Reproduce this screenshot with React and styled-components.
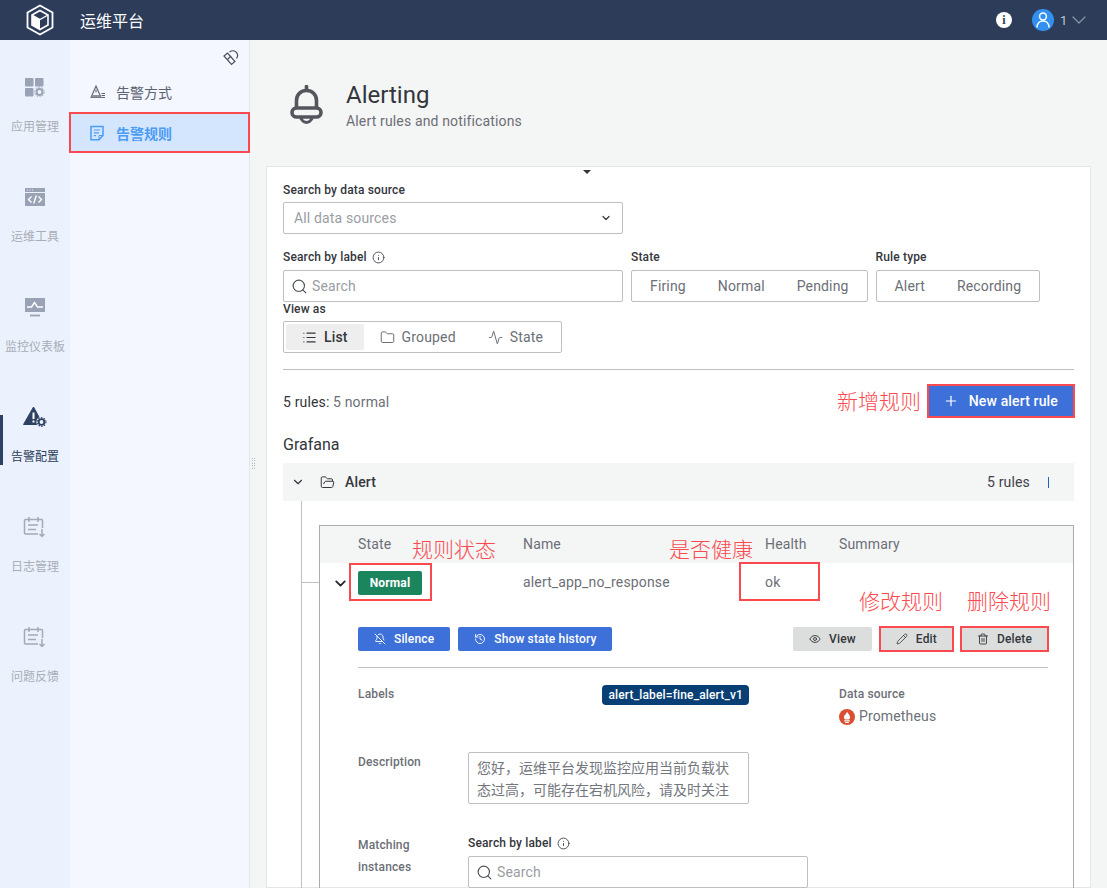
import React from 'react';
import styled, {createGlobalStyle} from 'styled-components';
import {
  Activity,
  BellOff,
  ChevronDown,
  Eye,
  Folder,
  FolderOpen,
  History,
  Info,
  List,
  Pencil,
  Plus,
  Search,
  Trash2,
} from 'lucide-react';

const FONT = `Roboto, "Noto Sans CJK SC", sans-serif`;
const RED = '#fa4a4f';

const LogoIcon = () => (
  <svg width="30" height="32" viewBox="0 0 30 32" fill="none" stroke="#fff">
    <path d="M15 1.5 27.5 8.5V23.5L15 30.5 2.5 23.5V8.5Z" strokeWidth="1.8" />
    <path d="M15 6.5 23 11V21L15 25.5 7 21V11Z" strokeWidth="1.6" />
    <path d="M15 15.5V25.5L7 21V11Z" fill="#fff" stroke="none" />
    <path d="M7 11 15 15.5 23 11" strokeWidth="1.4" />
  </svg>
);

const AppsIcon = () => (
  <svg width="22" height="20" viewBox="0 0 22 20" fill="#9aa3b5">
    <rect x="1" y="1" width="8.5" height="8.5" rx="1" />
    <rect x="11" y="1" width="8.5" height="8.5" rx="1" />
    <rect x="1" y="11" width="8.5" height="8.5" rx="1" />
    <circle cx="15.5" cy="15" r="3" fill="none" stroke="#9aa3b5" strokeWidth="2" />
    <circle cx="15.5" cy="15" r="4.8" fill="none" stroke="#9aa3b5" strokeWidth="1" strokeDasharray="1.5 1.5" />
  </svg>
);

const CodeIcon = () => (
  <svg width="22" height="20" viewBox="0 0 22 20">
    <rect x="1" y="1" width="20" height="18" fill="#9aa3b5" />
    <path d="M1 5.5H21" stroke="#ebf2fd" strokeWidth="1" />
    <path d="M3 3H4M5.5 3H6.5M8 3H9" stroke="#ebf2fd" strokeWidth="1" />
    <path
      d="M7.5 9.5 4.5 12.5 7.5 15.5M14.5 9.5 17.5 12.5 14.5 15.5M12.3 8.5 9.7 16.5"
      stroke="#fff"
      strokeWidth="1.4"
      fill="none"
    />
  </svg>
);

const MonitorIcon = () => (
  <svg width="22" height="20" viewBox="0 0 22 20">
    <rect x="1" y="1" width="20" height="14" fill="#9aa3b5" />
    <path d="M3 10H7.5L10.5 5.5 13.5 10H19" stroke="#fff" strokeWidth="1.5" fill="none" />
    <path d="M6 18.5H16" stroke="#9aa3b5" strokeWidth="1.8" />
  </svg>
);

const AlertGearIcon = () => (
  <svg width="24" height="22" viewBox="0 0 24 22">
    <path d="M10.5 1 20 18.5H.5Z" fill="#2f4163" stroke="#2f4163" strokeLinejoin="round" />
    <path d="M10.5 6.5V13M10.5 14.5V16.5" stroke="#fff" strokeWidth="2" />
    <circle cx="18.5" cy="16" r="5.2" fill="#ebf2fd" />
    <circle cx="18.5" cy="16" r="2.8" fill="none" stroke="#2f4163" strokeWidth="1.8" />
    <circle cx="18.5" cy="16" r="4.4" fill="none" stroke="#2f4163" strokeWidth="1.1" strokeDasharray="1.5 1.3" />
  </svg>
);

const CalendarIcon = () => (
  <svg width="24" height="22" viewBox="0 0 24 22" fill="none" stroke="#a3abbb" strokeWidth="1.5">
    <path d="M19.5 12V4.5Q19.5 3.5 18.5 3.5H2.5Q1.5 3.5 1.5 4.5V17Q1.5 18 2.5 18H15" />
    <path d="M6 1V6M15 1V6M5 9H15M5 13.5H13" />
    <path d="M19 13V20.5M16.5 18 19 20.5 21.5 18" />
  </svg>
);

const AlertMethodIcon = () => (
  <svg width="16" height="14" viewBox="0 0 16 14" fill="none" stroke="#5d6270" strokeWidth="1.1">
    <path d="M6 1 11 12.5H1Z" />
    <path d="M2.5 10H9.8L11 12.5H1Z" fill="#8b8f9a" stroke="none" />
    <path d="M6 4.5V7.5M11.5 8.5H15M11.5 10.5H15M11.5 12.5H15" />
  </svg>
);

const AlertRuleIcon = () => (
  <svg width="14" height="16" viewBox="0 0 14 16" fill="none" stroke="#4b9cf5" strokeWidth="1.5">
    <path d="M1 1.5H13V10.5L9 14.8H1Z" />
    <path d="M9 14.8V10.5H13" strokeWidth="1" />
    <path d="M3.8 5H10M3.8 7.8H9M3.8 10.6H6" strokeWidth="1.2" />
  </svg>
);

const PinIcon = () => (
  <svg width="16" height="16" viewBox="0 0 16 16" fill="none" stroke="#4c5058" strokeWidth="1.2">
    <path d="M1 6 4.5 3 12 11.5 8.5 14.5Z" />
    <path d="M6.5 2Q10 -.5 13 2T13.5 8.5" />
    <path d="M4.5 9.5 8 6" />
  </svg>
);

const BellIcon = () => (
  <svg width="33" height="40" viewBox="0 0 33 40" fill="none" stroke="#53565c" strokeWidth="3.6">
    <path d="M16.5 1.5V5" strokeLinecap="round" />
    <path d="M6.5 23V15.5C6.5 9.5 11 5.5 16.5 5.5S26.5 9.5 26.5 15.5V23" />
    <rect x="2" y="23" width="29" height="9" rx="4.5" />
    <path d="M10.5 33Q16.5 42 22.5 33" strokeWidth="3" />
  </svg>
);

const UserIcon = () => (
  <svg width="14" height="16" viewBox="0 0 14 16" fill="none" stroke="#fff" strokeWidth="1.5">
    <circle cx="7" cy="4.5" r="3.4" />
    <path d="M1 15.5C1 11.5 3.5 9 7 9S13 11.5 13 15.5" />
  </svg>
);

const PrometheusIcon = () => (
  <svg width="16" height="16" viewBox="0 0 16 16">
    <circle cx="8" cy="8" r="8" fill="#da4e31" />
    <path d="M8 2.5C9 5 11 5.5 11 8.5 11 9.5 10.5 10 10 10.5H6C5.5 10 5 9.5 5 8.5 5 5.5 7.5 5.5 8 2.5Z" fill="#fff" />
    <path d="M5.2 11.3H10.8V12.5H5.2ZM6.2 13H9.8V14H6.2Z" fill="#fff" />
  </svg>
);

const railItems = [
  {label: '应用管理', icon: <AppsIcon />},
  {label: '运维工具', icon: <CodeIcon />},
  {label: '监控仪表板', icon: <MonitorIcon />},
  {label: '告警配置', icon: <AlertGearIcon />, active: true},
  {label: '日志管理', icon: <CalendarIcon />},
  {label: '问题反馈', icon: <CalendarIcon />},
];

const notes = [
  {text: '新增规则', x: 837, y: 386},
  {text: '规则状态', x: 412, y: 534},
  {text: '是否健康', x: 669, y: 534},
  {text: '修改规则', x: 859, y: 586},
  {text: '删除规则', x: 967, y: 586},
];

const SearchBox = () => (
  <InputBox>
    <Search size={17} color="#4b4f56" strokeWidth={1.6} />
    <Placeholder>Search</Placeholder>
  </InputBox>
);

const App = () => (
  <Page>
    <GlobalStyle />
    <TopBar>
      <LogoSlot>
        <LogoIcon />
      </LogoSlot>
      <Brand>运维平台</Brand>
      <TopActions>
        <InfoDot>i</InfoDot>
        <Avatar>
          <UserIcon />
        </Avatar>
        <UserName>1</UserName>
        <ChevronDown size={24} color="#8693a8" strokeWidth={1.3} />
      </TopActions>
    </TopBar>

    <Body>
      <Rail>
        {railItems.map(item => (
          <RailItem key={item.label} $active={item.active}>
            <RailIcon>{item.icon}</RailIcon>
            <RailLabel $active={item.active}>{item.label}</RailLabel>
          </RailItem>
        ))}
      </Rail>

      <SubNav>
        <PinSlot>
          <PinIcon />
        </PinSlot>
        <SubItem>
          <AlertMethodIcon />
          告警方式
        </SubItem>
        <SubItem $active>
          <AlertRuleIcon />
          告警规则
        </SubItem>
        <Handle />
      </SubNav>

      <Main>
        <Header>
          <BellIcon />
          <div>
            <Title>Alerting</Title>
            <Subtitle>Alert rules and notifications</Subtitle>
          </div>
        </Header>

        <Card>
          <Caret />
          <FieldLabel $gap="5px">Search by data source</FieldLabel>
          <SelectBox>
            <SelectText>All data sources</SelectText>
            <ChevronDown size={12} color="#33363c" strokeWidth={2.4} />
          </SelectBox>

          <FilterRow>
            <Field $width="340px">
              <FieldLabel>
                Search by label
                <Info size={13} color="#4b4f56" strokeWidth={1.8} />
              </FieldLabel>
              <SearchBox />
            </Field>
            <Field>
              <FieldLabel>State</FieldLabel>
              <Segments>
                <Segment>Firing</Segment>
                <Segment>Normal</Segment>
                <Segment>Pending</Segment>
              </Segments>
            </Field>
            <Field>
              <FieldLabel>Rule type</FieldLabel>
              <Segments>
                <Segment>Alert</Segment>
                <Segment>Recording</Segment>
              </Segments>
            </Field>
          </FilterRow>

          <FieldLabel $gap="5px">View as</FieldLabel>
          <Segments>
            <Segment $active>
              <List size={15} strokeWidth={1.8} />
              List
            </Segment>
            <Segment>
              <Folder size={15} strokeWidth={1.6} />
              Grouped
            </Segment>
            <Segment>
              <Activity size={15} strokeWidth={1.6} />
              State
            </Segment>
          </Segments>

          <Divider />

          <StatsRow>
            <Stats>
              <strong>5 rules:</strong> 5 normal
            </Stats>
            <PrimaryButton $large $marked>
              <Plus size={16} strokeWidth={1.8} />
              New alert rule
            </PrimaryButton>
          </StatsRow>

          <Namespace>Grafana</Namespace>
          <GroupRow>
            <ChevronDown size={14} color="#33363c" />
            <FolderOpen size={15} color="#33363c" strokeWidth={1.6} />
            <GroupName>Alert</GroupName>
            <GroupCount>5 rules</GroupCount>
            <GroupTick />
          </GroupRow>

          <GroupBody>
            <RuleTable>
              <TableHead>
                <span>State</span>
                <span>Name</span>
                <span>Health</span>
                <span>Summary</span>
              </TableHead>

              <RuleRow>
                <RowChevron>
                  <ChevronDown size={17} color="#24262b" strokeWidth={2.6} />
                </RowChevron>
                <Badge>Normal</Badge>
                <RowText>alert_app_no_response</RowText>
                <RowText>ok</RowText>
              </RuleRow>

              <Details>
                <Actions>
                  <PrimaryButton>
                    <BellOff size={12} strokeWidth={1.8} />
                    Silence
                  </PrimaryButton>
                  <PrimaryButton>
                    <History size={12} strokeWidth={1.8} />
                    Show state history
                  </PrimaryButton>
                  <Spacer />
                  <GreyButton>
                    <Eye size={12} strokeWidth={1.8} />
                    View
                  </GreyButton>
                  <GreyButton $marked>
                    <Pencil size={12} strokeWidth={1.6} />
                    Edit
                  </GreyButton>
                  <GreyButton $marked>
                    <Trash2 size={12} strokeWidth={1.8} />
                    Delete
                  </GreyButton>
                </Actions>
                <ThinDivider />

                <InfoGrid>
                  <InfoLabel $offset="1px">Labels</InfoLabel>
                  <TagCell>
                    <Tag>alert_label=fine_alert_v1</Tag>
                  </TagCell>
                  <span />
                  <div>
                    <InfoLabel $offset="1px">Data source</InfoLabel>
                    <Source>
                      <PrometheusIcon />
                      Prometheus
                    </Source>
                  </div>
                </InfoGrid>

                <InfoGrid $top="26px">
                  <InfoLabel $offset="2px">Description</InfoLabel>
                  <Description>
                    您好，运维平台发现监控应用当前负载状态过高，可能存在宕机风险，请及时关注
                  </Description>
                </InfoGrid>

                <MatchGrid>
                  <MatchLabel>
                    Matching
                    <br />
                    instances
                  </MatchLabel>
                  <div>
                    <FieldLabel>
                      Search by label
                      <Info size={13} color="#4b4f56" strokeWidth={1.8} />
                    </FieldLabel>
                    <SearchBox />
                  </div>
                </MatchGrid>
              </Details>
            </RuleTable>
          </GroupBody>
        </Card>
      </Main>
    </Body>

    {notes.map(note => (
      <Note key={note.text} $x={note.x} $y={note.y}>
        {note.text}
      </Note>
    ))}
    <RedBox $x={349} $y={563} $w={83} $h={38} />
    <RedBox $x={739} $y={562} $w={81} $h={39} />
  </Page>
);

export default App;

const GlobalStyle = createGlobalStyle`
  html, body {
    margin: 0;
    padding: 0;
    height: 100%;
    overflow: hidden;
  }
  * {
    box-sizing: border-box;
  }
`;

const Page = styled.div`
  position: relative;
  width: 1107px;
  height: 888px;
  overflow: hidden;
  font-family: ${FONT};
  letter-spacing: 0.15px;
  color: #3f4249;
  background: #f4f5f5;
`;

const TopBar = styled.header`
  display: flex;
  align-items: center;
  height: 40px;
  background: #2c3c59;
  color: #fff;
`;

const LogoSlot = styled.div`
  display: flex;
  justify-content: center;
  width: 80px;
`;

const Brand = styled.div`
  margin-top: -1px;
  font-size: 16px;
  letter-spacing: 0;
`;

const TopActions = styled.div`
  display: flex;
  align-items: center;
  margin-left: auto;
  padding-right: 16px;
`;

const InfoDot = styled.div`
  display: flex;
  align-items: center;
  justify-content: center;
  width: 16px;
  height: 16px;
  margin-right: 20px;
  border-radius: 50%;
  background: #fff;
  color: #2c3c59;
  font: 700 12px 'Liberation Serif', serif;
`;

const Avatar = styled.div`
  display: flex;
  align-items: center;
  justify-content: center;
  width: 22px;
  height: 22px;
  border-radius: 50%;
  background: #3291f0;
`;

const UserName = styled.span`
  margin: 0 0 0 6px;
  width: 7px;
  font-size: 13px;
  color: #b9c6d8;
`;

const Body = styled.div`
  display: flex;
  height: 848px;
`;

const Rail = styled.nav`
  flex: 0 0 70px;
  padding-top: 20px;
  background: #ebf2fd;
`;

const RailItem = styled.div`
  position: relative;
  display: flex;
  flex-direction: column;
  align-items: center;
  height: 110px;
  padding-top: 17px;

  &::before {
    content: '';
    display: ${({$active}) => ($active ? 'block' : 'none')};
    position: absolute;
    left: 0;
    top: 25px;
    width: 3px;
    height: 50px;
    background: #2f4163;
  }
`;

const RailIcon = styled.div`
  display: flex;
  align-items: center;
  justify-content: center;
  height: 20px;
`;

const RailLabel = styled.div`
  margin-top: 21px;
  font-size: 12px;
  line-height: 18px;
  letter-spacing: 0;
  white-space: nowrap;
  color: ${({$active}) => ($active ? '#2c3c59' : '#a9adb8')};
`;

const SubNav = styled.aside`
  position: relative;
  flex: 0 0 180px;
  padding-top: 30px;
  background: #f4f7ff;
  border-right: 1px solid #e3e5ea;
`;

const PinSlot = styled.div`
  position: absolute;
  top: 10px;
  right: 10px;
`;

const SubItem = styled.div`
  position: relative;
  display: flex;
  align-items: center;
  gap: ${({$active}) => ($active ? '12px' : '10px')};
  height: 39px;
  padding-left: 20px;
  font-size: 14px;
  letter-spacing: 0;
  font-weight: ${({$active}) => ($active ? 700 : 400)};
  color: ${({$active}) => ($active ? '#4b9cf5' : '#5d6270')};
  background: ${({$active}) => ($active ? '#d4e6fd' : 'transparent')};
  outline: ${({$active}) => ($active ? `2px solid ${RED}` : 'none')};
  outline-offset: -1px;
  margin-top: 2px;
`;

const Handle = styled.div`
  position: absolute;
  top: 417px;
  right: -7px;
  width: 5px;
  height: 13px;
  background-image: radial-gradient(#7b8296 0.7px, transparent 0.8px);
  background-size: 2.5px 2.5px;
`;

const Main = styled.main`
  flex: 1;
  min-width: 0;
  padding: 0 16px;
`;

const Header = styled.div`
  display: flex;
  align-items: center;
  gap: 23px;
  height: 126px;
  padding: 4px 0 0 24px;
`;

const Title = styled.h1`
  margin: 0;
  font-size: 24px;
  font-weight: 400;
  line-height: 30px;
  letter-spacing: 0;
  color: #33363c;
`;

const Subtitle = styled.div`
  margin-top: 2px;
  font-size: 14px;
  line-height: 18px;
  color: #6c6f76;
`;

const Card = styled.section`
  position: relative;
  height: 722px;
  padding: 16px 16px 0;
  background: #fff;
  border: 1px solid #e4e6e6;
`;

const Caret = styled.div`
  position: absolute;
  top: 3px;
  left: 316px;
  border-left: 4px solid transparent;
  border-right: 4px solid transparent;
  border-top: 4px solid #33363c;
`;

const FieldLabel = styled.div`
  display: flex;
  align-items: center;
  gap: 5px;
  height: 14px;
  margin-bottom: ${({$gap}) => $gap || '6px'};
  font-size: 12px;
  font-weight: 500;
  line-height: 14px;
  color: #33363c;
`;

const inputBorder = '1px solid #bdbfc1';

const SelectBox = styled.div`
  display: flex;
  align-items: center;
  justify-content: space-between;
  width: 340px;
  height: 32px;
  padding: 0 10px 0 10px;
  border: ${inputBorder};
  border-radius: 2px;
`;

const SelectText = styled.span`
  font-size: 14px;
  color: #9a9da3;
`;

const FilterRow = styled.div`
  display: flex;
  gap: 8px;
  margin-top: 16px;
`;

const Field = styled.div`
  width: ${({$width}) => $width || 'auto'};
`;

const InputBox = styled.div`
  display: flex;
  align-items: center;
  gap: 4px;
  height: 32px;
  padding: 0 7px;
  border: ${inputBorder};
  border-radius: 2px;
`;

const Placeholder = styled.span`
  font-size: 14px;
  color: #9a9da3;
`;

const Segments = styled.div`
  display: inline-flex;
  align-items: center;
  height: 32px;
  padding: 2px;
  border: ${inputBorder};
  border-radius: 2px;
  vertical-align: top;
`;

const Segment = styled.div`
  display: flex;
  align-items: center;
  gap: 7px;
  height: 26px;
  padding: 0 16px;
  border-radius: 2px;
  font-size: 14px;
  font-weight: ${({$active}) => ($active ? 500 : 400)};
  color: ${({$active}) => ($active ? '#33363c' : '#6c6f76')};
  background: ${({$active}) => ($active ? '#eeeeee' : 'transparent')};
`;

const Divider = styled.hr`
  margin: 16px 0 0;
  border: 0;
  border-top: 1px solid #bdbfc1;
`;

const StatsRow = styled.div`
  display: flex;
  align-items: center;
  justify-content: space-between;
  height: 30px;
  margin-top: 16px;
  padding-right: 1px;
`;

const Stats = styled.div`
  padding-top: 2px;
  font-size: 14px;
  color: #6c6f76;

  strong {
    font-weight: 400;
    color: #33363c;
  }
`;

const PrimaryButton = styled.button`
  display: inline-flex;
  align-items: center;
  gap: ${({$large}) => ($large ? '10px' : '8px')};
  height: ${({$large}) => ($large ? '30px' : '24px')};
  padding: ${({$large}) => ($large ? '0 15px 0 14px' : '0 16px')};
  border: 0;
  border-radius: ${({$marked}) => ($marked ? '0' : '2px')};
  background: #3d71d9;
  color: #fff;
  font-family: inherit;
  letter-spacing: inherit;
  font-size: ${({$large}) => ($large ? '14px' : '12px')};
  font-weight: 500;
  outline: ${({$marked}) => ($marked ? `2px solid ${RED}` : 'none')};
`;

const Namespace = styled.div`
  margin-top: 18px;
  font-size: 16px;
  line-height: 22px;
  letter-spacing: 0;
  color: #33363c;
`;

const GroupRow = styled.div`
  display: flex;
  align-items: center;
  height: 38px;
  margin-top: 7px;
  padding: 0 25px 0 8px;
  background: #f4f5f5;

  svg:nth-child(2) {
    margin-left: 15px;
  }
`;

const GroupName = styled.span`
  margin-left: 10px;
  font-size: 14px;
  font-weight: 500;
  color: #33363c;
`;

const GroupCount = styled.span`
  margin-left: auto;
  font-size: 14px;
  color: #3f4249;
`;

const GroupTick = styled.span`
  width: 1px;
  height: 11px;
  margin-left: 18px;
  background: #1f60c4;
`;

const GroupBody = styled.div`
  height: 400px;
  margin-left: 18px;
  padding: 24px 0 0 17px;
  border-left: 1px solid #bdbfc1;
`;

const RuleTable = styled.div`
  position: relative;
  height: 376px;
  border: 1px solid #a9abad;
  border-bottom: 0;
`;

const columns = '165px 242px 74px 1fr';

const TableHead = styled.div`
  display: grid;
  grid-template-columns: ${columns};
  align-items: center;
  height: 37px;
  padding: 0 0 2px 38px;
  background: #f4f5f5;
  font-size: 14px;
  color: #6c6f76;
`;

const RuleRow = styled.div`
  position: relative;
  display: grid;
  grid-template-columns: ${columns};
  align-items: center;
  height: 40px;
  padding: 8px 0 8px 38px;

  &::before {
    content: '';
    position: absolute;
    left: -19px;
    top: 19px;
    width: 18px;
    height: 1px;
    background: #bdbfc1;
  }
`;

const RowText = styled.span`
  margin-bottom: 3px;
  font-size: 14px;
  color: #6c6f76;
`;

const RowChevron = styled.span`
  position: absolute;
  left: 12px;
  top: 12px;
  display: flex;
`;

const Badge = styled.span`
  display: flex;
  align-items: center;
  justify-content: center;
  width: 64px;
  height: 24px;
  padding-bottom: 1px;
  border-radius: 2px;
  background: #1b855e;
  color: #fff;
  font-size: 12px;
  font-weight: 700;
`;

const Details = styled.div`
  padding: 24px 25px 0 38px;
`;

const Actions = styled.div`
  display: flex;
  gap: 8px;
`;

const Spacer = styled.div`
  flex: 1;
`;

const GreyButton = styled.button`
  display: inline-flex;
  align-items: center;
  gap: 8px;
  height: 24px;
  padding: 0 16px;
  border: 0;
  border-radius: ${({$marked}) => ($marked ? '0' : '2px')};
  background: #dcdede;
  color: #33363c;
  font-family: inherit;
  letter-spacing: inherit;
  font-size: 12px;
  font-weight: 500;
  outline: ${({$marked}) => ($marked ? `2px solid ${RED}` : 'none')};
  outline-offset: -1px;
`;

const ThinDivider = styled.hr`
  margin: 16px 0 17px;
  border: 0;
  border-top: 1px solid #bdbfc1;
`;

const InfoGrid = styled.div`
  display: grid;
  grid-template-columns: 110px 281px 90px 1fr;
  margin-top: ${({$top}) => $top || '0'};
`;

const InfoLabel = styled.div`
  margin-top: ${({$offset}) => $offset || '0'};
  font-size: 12px;
  font-weight: 500;
  line-height: 16px;
  color: #6c6f76;
`;

const TagCell = styled.div`
  display: flex;
  justify-content: flex-end;
`;

const Tag = styled.span`
  height: 20px;
  padding: 0 6px;
  border-radius: 4px;
  background: #0a3f75;
  color: #fff;
  font-size: 12px;
  font-weight: 500;
  line-height: 20px;
`;

const Source = styled.div`
  display: flex;
  align-items: center;
  gap: 4px;
  margin-top: 5px;
  font-size: 14px;
  line-height: 19px;
  color: #6c6f76;
`;

const Description = styled.div`
  height: 52px;
  padding: 4px 8px;
  border: ${inputBorder};
  border-radius: 2px;
  font-size: 14px;
  line-height: 22px;
  letter-spacing: 0;
  color: #73767c;
`;

const MatchGrid = styled.div`
  display: grid;
  grid-template-columns: 110px 340px;
  margin-top: 32px;
`;

const MatchLabel = styled.div`
  margin-top: -2px;
  font-size: 12px;
  font-weight: 500;
  line-height: 22px;
  color: #6c6f76;
`;

const Note = styled.div`
  position: absolute;
  left: ${({$x}) => $x}px;
  top: ${({$y}) => $y}px;
  font-family: 'Noto Sans CJK SC', sans-serif;
  font-size: 21px;
  font-weight: 300;
  line-height: 28px;
  letter-spacing: 0;
  color: ${RED};
  white-space: nowrap;
`;

const RedBox = styled.div`
  position: absolute;
  left: ${({$x}) => $x}px;
  top: ${({$y}) => $y}px;
  width: ${({$w}) => $w}px;
  height: ${({$h}) => $h}px;
  border: 2px solid ${RED};
`;
